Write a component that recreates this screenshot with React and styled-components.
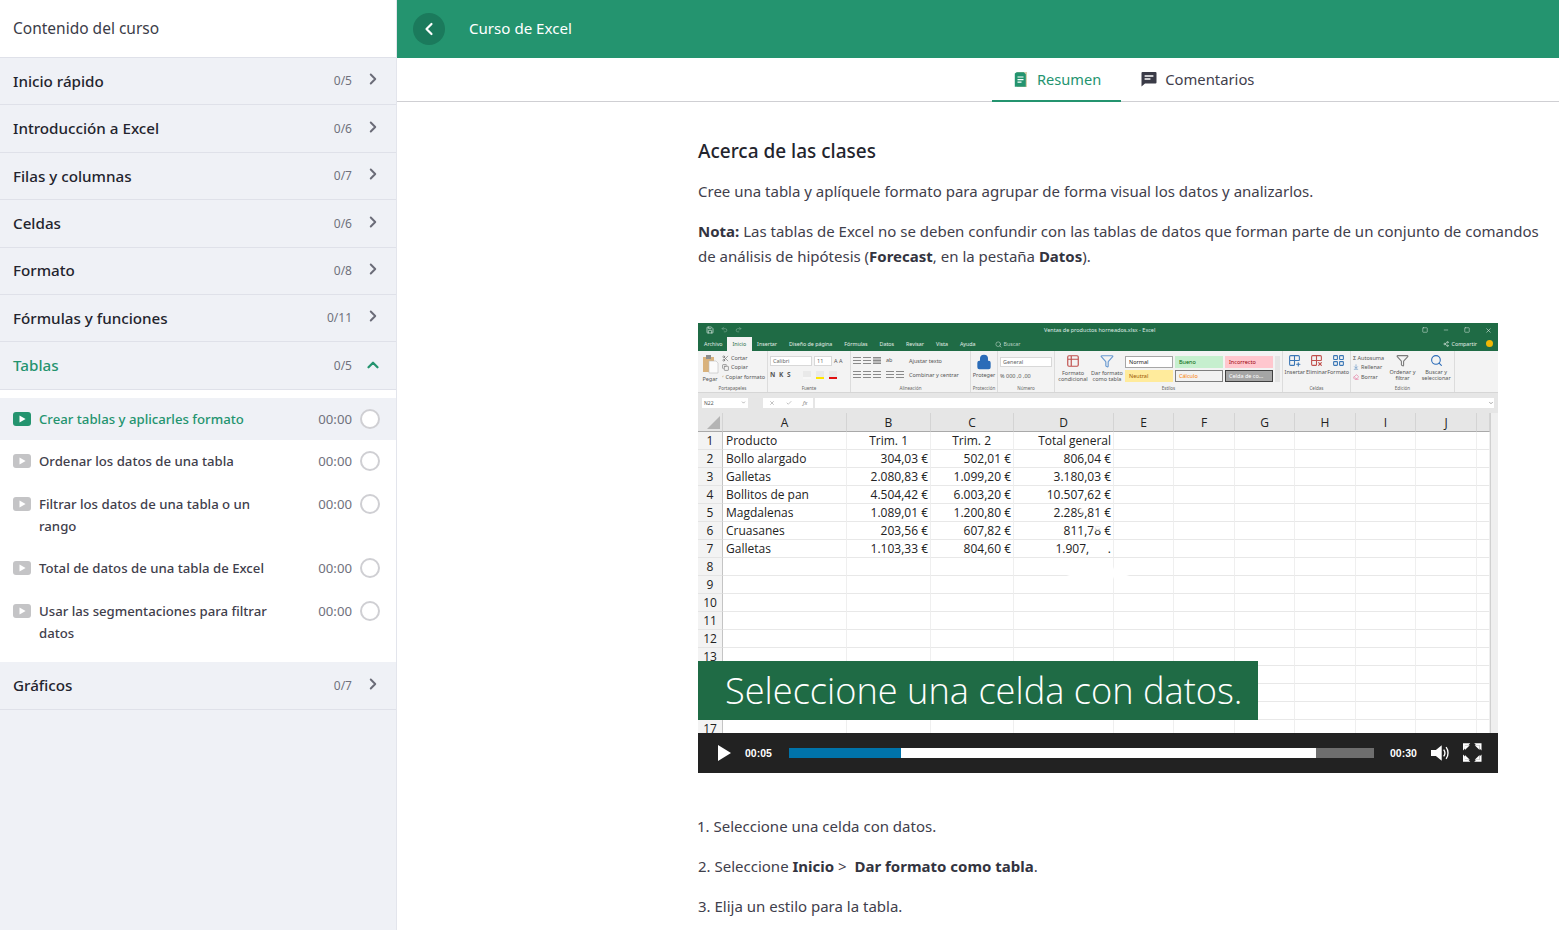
import React from "react";
import styled, { createGlobalStyle } from "styled-components";
import {
  ChevronRight,
  ChevronUp,
  ChevronLeft,
  ChevronDown,
  Scissors,
  Copy,
  Paintbrush,
  Save,
  Undo2,
  Redo2,
  Search,
  Share2,
  Lock,
  ArrowDownToLine,
  Eraser,
  Minus,
  Square,
  X,
  Check,
  Filter,
  Table2,
  Grid2x2Plus,
  Grid2x2X,
  LayoutGrid,
} from "lucide-react";

const GlobalStyle = createGlobalStyle`
  html, body {
    margin: 0;
    height: 100%;
    overflow: hidden;
    background: #fff;
    font-family: "Noto Sans", "Open Sans", sans-serif;
    color: #33343f;
  }
  * { box-sizing: border-box; }
`;

const sections = [
  { name: "Inicio rápido", count: "0/5" },
  { name: "Introducción a Excel", count: "0/6" },
  { name: "Filas y columnas", count: "0/7" },
  { name: "Celdas", count: "0/6" },
  { name: "Formato", count: "0/8" },
  { name: "Fórmulas y funciones", count: "0/11" },
];

const lessons = [
  { title: "Crear tablas y aplicarles formato", active: true },
  { title: "Ordenar los datos de una tabla" },
  { title: "Filtrar los datos de una tabla o un rango" },
  { title: "Total de datos de una tabla de Excel" },
  { title: "Usar las segmentaciones para filtrar datos" },
];

const columns = ["A", "B", "C", "D", "E", "F", "G", "H", "I", "J", ""];

const sheet = [
  ["Producto", "Trim. 1", "Trim. 2", "Total general"],
  ["Bollo alargado", "304,03 €", "502,01 €", "806,04 €"],
  ["Galletas", "2.080,83 €", "1.099,20 €", "3.180,03 €"],
  ["Bollitos de pan", "4.504,42 €", "6.003,20 €", "10.507,62 €"],
  ["Magdalenas", "1.089,01 €", "1.200,80 €", "2.289,81 €"],
  ["Cruasanes", "203,56 €", "607,82 €", "811,78 €"],
  ["Galletas", "1.103,33 €", "804,60 €", "1.907,      ."],
];

const excelTabs = ["Insertar", "Diseño de página", "Fórmulas", "Datos", "Revisar", "Vista", "Ayuda"];

const cellStyles = [
  { label: "Normal", bg: "#fff", fg: "#222", line: "#a6a6a6" },
  { label: "Bueno", bg: "#c6efce", fg: "#006100" },
  { label: "Incorrecto", bg: "#ffc7ce", fg: "#9c0006" },
  { label: "Neutral", bg: "#ffeb9c", fg: "#9c5700" },
  { label: "Cálculo", bg: "#f2f2f2", fg: "#fa7d00", line: "#7f7f7f" },
  { label: "Celda de co...", bg: "#a5a5a5", fg: "#fff", line: "#3f3f3f" },
];

const PlayBadge = ({ active }) => (
  <LessonIcon width="18" height="14" viewBox="0 0 18 14">
    <rect width="18" height="14" rx="3" fill={active ? "#24946f" : "#c4c4c6"} />
    <path d="M6.5 3.4v7.2L12.6 7z" fill="#fff" />
  </LessonIcon>
);

const SummaryIcon = () => (
  <svg width="13" height="15" viewBox="0 0 13 15">
    <path d="M3 0h10v15H3z" fill="#b9a76c" opacity="0.55" />
    <path d="M2.5 0.2h7.3l2 2v12.6h-11V1.5z" fill="#24946f" />
    <path d="M3.5 5h6M3.5 7.6h6M3.5 10.2h4" stroke="#fff" strokeWidth="1.2" />
  </svg>
);

const CommentIcon = () => (
  <svg width="16" height="16" viewBox="0 0 16 16">
    <path d="M1.500 1h13a1 1 0 0 1 1 1v9.600a1 1 0 0 1-1 1H4L.5 15.600V2a1 1 0 0 1 1-1z" fill="#3a3b47" />
    <path d="M3.600 5h8.800M3.600 8h5.800" stroke="#fff" strokeWidth="1.600" />
  </svg>
);

const PasteIcon = () => (
  <svg width="17" height="20" viewBox="0 0 17 20">
    <path d="M1 3h11v15H1z" fill="#d9b27c" />
    <path d="M4 1h5v4H4z" fill="#8d8d8d" />
    <path d="M7 7h7l2 2v10H7z" fill="#fbfbfb" stroke="#bdbdbd" strokeWidth="0.6" />
  </svg>
);

const SpeakerIcon = () => (
  <svg width="20" height="18" viewBox="0 0 20 18">
    <path d="M0 6h5l6-5v16l-6-5H0z" fill="#fff" />
    <path d="M13 5.500c1.500 2 1.500 5 0 7M15.500 3c2.600 3.400 2.600 8.600 0 12" stroke="#fff" strokeWidth="1.400" fill="none" />
  </svg>
);

const FullscreenIcon = () => (
  <svg width="19" height="19" viewBox="0 0 19 19">
    <path d="M0 0h7.500L5.500 2H2v3.500L0 7.500zM19 0v7.500l-2-2V2h-3.500l-2-2zM0 19v-7.500l2 2V17h3.500l2 2zM19 19h-7.500l2-2H17v-3.500l2-2z" fill="#fff" />
    <path d="M2 2h5L2 7zM17 2v5L12 2zM2 17v-5l5 5zM17 17h-5l5-5z" fill="#fff" />
  </svg>
);

const RibbonGroup = ({ width, label, children }) => (
  <GroupBox $w={width}>
    <GroupBody>{children}</GroupBody>
    <GroupLabel>{label}</GroupLabel>
  </GroupBox>
);

const App = () => {
  return (
    <Page>
      <GlobalStyle />
      <Sidebar>
        <SidebarTitle>Contenido del curso</SidebarTitle>
        {sections.map((s) => (
          <SectionRow key={s.name}>
            <SectionName>{s.name}</SectionName>
            <SectionCount>{s.count}</SectionCount>
            <Chevron><ChevronRight size={18} strokeWidth={2.6} /></Chevron>
          </SectionRow>
        ))}
        <SectionRow>
          <SectionName $open>Tablas</SectionName>
          <SectionCount>0/5</SectionCount>
          <Chevron $open><ChevronUp size={18} strokeWidth={3} /></Chevron>
        </SectionRow>
        <LessonList>
          {lessons.map((l) => (
            <Lesson key={l.title} $active={l.active}>
              <PlayBadge active={l.active} />
              <LessonTitle $active={l.active}>{l.title}</LessonTitle>
              <LessonTime>00:00</LessonTime>
              <LessonCheck />
            </Lesson>
          ))}
        </LessonList>
        <SectionRow>
          <SectionName>Gráficos</SectionName>
          <SectionCount>0/7</SectionCount>
          <Chevron><ChevronRight size={18} strokeWidth={2.6} /></Chevron>
        </SectionRow>
      </Sidebar>

      <Main>
        <TopBar>
          <BackButton><ChevronLeft size={20} strokeWidth={2.6} /></BackButton>
          <CourseTitle>Curso de Excel</CourseTitle>
        </TopBar>
        <Tabs>
          <Tab $active><SummaryIcon />Resumen</Tab>
          <Tab><CommentIcon />Comentarios</Tab>
        </Tabs>

        <Article>
          <Heading>Acerca de las clases</Heading>
          <Para>Cree una tabla y aplíquele formato para agrupar de forma visual los datos y analizarlos.</Para>
          <Para>
            <b>Nota:</b> Las tablas de Excel no se deben confundir con las tablas de datos que forman parte de un conjunto de comandos de análisis de hipótesis (<b>Forecast</b>, en la pestaña <b>Datos</b>).
          </Para>

          <Video>
            <ExcelTitle>
              <QuickTools>
                <Save size={8} />
                <Undo2 size={7} opacity={0.5} />
                <Redo2 size={7} opacity={0.5} />
              </QuickTools>
              <ExcelFile>Ventas de productos horneados.xlsx - Excel</ExcelFile>
              <WindowTools>
                <Square size={6} />
                <Minus size={6} />
                <Square size={6} />
                <X size={7} />
              </WindowTools>
            </ExcelTitle>
            <ExcelTabs>
              <ExcelTab>Archivo</ExcelTab>
              <ExcelTab $active>Inicio</ExcelTab>
              {excelTabs.map((t) => <ExcelTab key={t}>{t}</ExcelTab>)}
              <ExcelTab $search><Search size={7} /> Buscar</ExcelTab>
              <ShareBox><Share2 size={6} /> Compartir <Smiley /></ShareBox>
            </ExcelTabs>

            <Ribbon>
              <RibbonGroup width={70} label="Portapapeles">
                <BigTool $w={20}><PasteIcon /><Tiny>Pegar</Tiny></BigTool>
                <ToolColumn>
                  <ToolRow><Scissors size={7} /><Tiny>Cortar</Tiny></ToolRow>
                  <ToolRow><Copy size={7} /><Tiny>Copiar</Tiny></ToolRow>
                  <ToolRow><Paintbrush size={7} color="#c79a4b" /><Tiny>Copiar formato</Tiny></ToolRow>
                </ToolColumn>
              </RibbonGroup>
              <RibbonGroup width={83} label="Fuente">
                <ToolColumn>
                  <ToolRow>
                    <FieldBox $w={42}>Calibri</FieldBox>
                    <FieldBox $w={18}>11</FieldBox>
                    <Tiny>A A</Tiny>
                  </ToolRow>
                  <ToolRow>
                    <BoldTools>N K S</BoldTools>
                    <ColorChip $c="#f7f7f7" />
                    <ColorChip $c="#ffe600" />
                    <ColorChip $c="#e01010" />
                  </ToolRow>
                </ToolColumn>
              </RibbonGroup>
              <RibbonGroup width={120} label="Alineación">
                <GlyphColumn>
                  <ToolRow><LinesGlyph /><LinesGlyph /><LinesGlyph $on /></ToolRow>
                  <ToolRow><LinesGlyph /><LinesGlyph /><LinesGlyph /></ToolRow>
                </GlyphColumn>
                <GlyphColumn>
                  <ToolRow><Tiny>ab</Tiny></ToolRow>
                  <ToolRow><LinesGlyph /><LinesGlyph /></ToolRow>
                </GlyphColumn>
                <ToolColumn>
                  <ToolRow><Tiny>Ajustar texto</Tiny></ToolRow>
                  <ToolRow><Tiny>Combinar y centrar</Tiny></ToolRow>
                </ToolColumn>
              </RibbonGroup>
              <RibbonGroup width={27} label="Protección">
                <BigTool><Lock size={16} color="#2b6cb8" fill="#2b6cb8" /><Tiny>Proteger</Tiny></BigTool>
              </RibbonGroup>
              <RibbonGroup width={57} label="Número">
                <ToolColumn>
                  <FieldBox $w={52}>General</FieldBox>
                  <ToolRow><Tiny>% 000 ,0 ,00</Tiny></ToolRow>
                </ToolColumn>
              </RibbonGroup>
              <RibbonGroup width={228} label="Estilos">
                <BigTool $w={32}><Table2 size={14} color="#c0504d" /><Tiny>Formato condicional</Tiny></BigTool>
                <BigTool $w={32}><Filter size={14} color="#6b9bd1" /><Tiny>Dar formato como tabla</Tiny></BigTool>
                <StyleGrid>
                  {cellStyles.map((c) => (
                    <StyleSwatch key={c.label} $bg={c.bg} $fg={c.fg} $line={c.line}>{c.label}</StyleSwatch>
                  ))}
                </StyleGrid>
                <StyleScroll />
              </RibbonGroup>
              <RibbonGroup width={68} label="Celdas">
                <BigTool><Grid2x2Plus size={13} color="#3a76b5" /><Tiny>Insertar</Tiny></BigTool>
                <BigTool><Grid2x2X size={13} color="#c0504d" /><Tiny>Eliminar</Tiny></BigTool>
                <BigTool><LayoutGrid size={13} color="#3a76b5" /><Tiny>Formato</Tiny></BigTool>
              </RibbonGroup>
              <RibbonGroup width={104} label="Edición">
                <ToolColumn>
                  <ToolRow><Tiny>Σ Autosuma</Tiny></ToolRow>
                  <ToolRow><ArrowDownToLine size={6} color="#3a76b5" /><Tiny>Rellenar</Tiny></ToolRow>
                  <ToolRow><Eraser size={6} color="#e05a8a" /><Tiny>Borrar</Tiny></ToolRow>
                </ToolColumn>
                <BigTool><Filter size={13} color="#7a7a7a" /><Tiny>Ordenar y filtrar</Tiny></BigTool>
                <BigTool><Search size={13} color="#2b6cb8" /><Tiny>Buscar y seleccionar</Tiny></BigTool>
              </RibbonGroup>
            </Ribbon>

            <FormulaBar>
              <NameBox>N22<ChevronDown size={5} /></NameBox>
              <FormulaTools><X size={6} /><Check size={6} /><i>fx</i></FormulaTools>
              <FormulaInput><ChevronDown size={6} /></FormulaInput>
            </FormulaBar>

            <SheetArea>
              <SheetGrid>
                <ColumnHead><CornerMark /></ColumnHead>
                {columns.map((c, i) => <ColumnHead key={i}>{c}</ColumnHead>)}
                {Array.from({ length: 17 }).map((_, r) => (
                  <React.Fragment key={r}>
                    <RowHead>{r + 1}</RowHead>
                    {columns.map((c, i) => {
                      const value = sheet[r] && sheet[r][i];
                      return (
                        <Cell key={i} $num={i > 0 && i < 4} $head={r === 0 && (i === 1 || i === 2)}>
                          {value}
                        </Cell>
                      );
                    })}
                  </React.Fragment>
                ))}
              </SheetGrid>
              <SheetScroll><ScrollThumb /></SheetScroll>
            </SheetArea>

            <Caption>Seleccione una celda con datos.</Caption>
            <Wipe $x={382} $y={184} $w={7} $h={6} />
            <Wipe $x={396} $y={202} $w={8} $h={5} />
            <Wipe $x={370} $y={245} $w={60} $h={10} />

            <Controls>
              <PlayButton />
              <TimeLabel>00:05</TimeLabel>
              <Track>
                <TrackFill $w={527} $c="#fff" />
                <TrackFill $w={112} $c="#0073aa" />
              </Track>
              <TimeLabel $end>00:30</TimeLabel>
              <SpeakerIcon />
              <FullscreenIcon />
            </Controls>
          </Video>

          <StepPara>1. Seleccione una celda con datos.</StepPara>
          <Para>2. Seleccione <b>Inicio</b> &gt;&nbsp; <b>Dar formato como tabla</b>.</Para>
          <Para>3. Elija un estilo para la tabla.</Para>
        </Article>
      </Main>
    </Page>
  );
};

const Page = styled.div`
  display: flex;
  height: 100vh;
  overflow: hidden;
`;

const Sidebar = styled.aside`
  width: 397px;
  flex: none;
  height: 100%;
  background: #eff1f6;
  border-right: 1px solid #e3e5ec;
`;
const SidebarTitle = styled.div`
  height: 58px;
  padding: 0 0 2px 13px;
  display: flex;
  align-items: center;
  background: #fff;
  font-size: 15.5px;
  color: #3b3c48;
  border-bottom: 1px solid #dfe1e9;
`;
const SectionRow = styled.div`
  height: 47.4px;
  display: flex;
  align-items: center;
  padding: 0 14px 0.6px 13px;
  border-bottom: 1px solid #dfe1e9;
`;
const SectionName = styled.div`
  flex: 1;
  font-size: 15.2px;
  font-weight: 500;
  color: ${({ $open }) => ($open ? "#24946f" : "#23242d")};
`;
const SectionCount = styled.div`
  font-size: 12px;
  color: #70717d;
  width: 30px;
  text-align: right;
  white-space: nowrap;
`;
const Chevron = styled.div`
  width: 30px;
  display: flex;
  justify-content: flex-end;
  margin-top: ${({ $open }) => ($open ? "0" : "-3px")};
  color: ${({ $open }) => ($open ? "#24946f" : "#6b6c78")};
`;

const LessonList = styled.div`
  background: #fff;
  padding: 8px 0;
`;
const Lesson = styled.div`
  display: flex;
  align-items: flex-start;
  padding: 10.2px 16px 9.9px 13px;
  background: ${({ $active }) => ($active ? "#eff1f6" : "transparent")};
`;
const LessonIcon = styled.svg`
  flex: none;
  margin: 4px 8px 0 0;
`;
const LessonTitle = styled.div`
  width: 240px;
  font-size: 13.2px;
  font-weight: 500;
  line-height: 22.3px;
  color: ${({ $active }) => ($active ? "#24946f" : "#3f404c")};
`;
const LessonTime = styled.div`
  margin-left: auto;
  font-size: 13.2px;
  line-height: 22px;
  color: #70717d;
`;
const LessonCheck = styled.div`
  flex: none;
  width: 20px;
  height: 20px;
  margin: 1px 0 0 8px;
  border: 2px solid #cfcfd3;
  border-radius: 50%;
  background: #fff;
`;

const Main = styled.main`
  flex: 1;
  min-width: 0;
  height: 100%;
  overflow: hidden;
`;
const TopBar = styled.header`
  height: 58px;
  background: #24946f;
  display: flex;
  align-items: center;
  padding-left: 16px;
`;
const BackButton = styled.div`
  width: 32px;
  height: 32px;
  border-radius: 50%;
  background: #1b7a5c;
  color: #fff;
  display: flex;
  align-items: center;
  justify-content: center;
`;
const CourseTitle = styled.div`
  margin: 0 0 2px 24px;
  color: #fff;
  font-size: 15.1px;
`;
const Tabs = styled.nav`
  height: 44px;
  display: flex;
  padding-left: 595px;
  border-bottom: 1px solid #cfcfd3;
`;
const Tab = styled.div`
  height: 44px;
  display: flex;
  align-items: center;
  gap: ${({ $active }) => ($active ? "10px" : "8px")};
  padding: ${({ $active }) => ($active ? "0 20px 0 22px" : "0 20px")};
  font-size: ${({ $active }) => ($active ? "14.6px" : "14.8px")};
  color: ${({ $active }) => ($active ? "#24946f" : "#3f404c")};
  border-bottom: 2px solid ${({ $active }) => ($active ? "#24946f" : "transparent")};
`;

const Article = styled.article`
  padding: 35px 14px 0 301px;
`;
const Heading = styled.h2`
  margin: 0 0 13.5px;
  font-size: 19px;
  font-weight: 500;
  line-height: 28px;
  color: #23242d;
`;
const Para = styled.p`
  margin: 0 0 15px;
  font-size: 15px;
  line-height: 25px;
  color: #3f404c;
  b { font-weight: 700; color: #33343f; }
`;
const StepPara = styled(Para)`
  margin-top: 41px;
  margin-left: -1px;
`;

const Video = styled.div`
  position: relative;
  width: 800px;
  height: 450px;
  margin-top: 54px;
  display: flex;
  flex-direction: column;
  overflow: hidden;
  background: #fff;
`;
const ExcelTitle = styled.div`
  height: 13px;
  flex: none;
  padding: 2px 6px 0 8px;
  background: #1f6b45;
  color: #dfece5;
  display: flex;
  align-items: center;
  justify-content: space-between;
`;
const QuickTools = styled.div`
  display: flex;
  gap: 7px;
  width: 338px;
`;
const ExcelFile = styled.div`
  font-size: 5.5px;
  flex: 1;
`;
const WindowTools = styled.div`
  display: flex;
  gap: 15px;
  align-items: center;
`;
const ExcelTabs = styled.div`
  height: 15px;
  flex: none;
  background: #1f6b45;
  display: flex;
  align-items: flex-end;
`;
const ExcelTab = styled.div`
  height: 14px;
  display: flex;
  align-items: center;
  gap: 2px;
  padding: 1px 6px 0;
  font-size: 5.3px;
  white-space: nowrap;
  color: ${({ $active }) => ($active ? "#1f6b45" : "#e4efe9")};
  background: ${({ $active }) => ($active ? "#f3f3f3" : "transparent")};
  margin-left: ${({ $active, $search }) => ($active ? "-2px" : $search ? "7px" : "0")};
  margin-right: ${({ $active }) => ($active ? "-1px" : "0")};
  ${({ $search }) => $search && "color: #bcd5c8;"}
`;
const ShareBox = styled.div`
  margin-left: auto;
  height: 14px;
  padding-right: 5px;
  display: flex;
  align-items: center;
  gap: 3px;
  font-size: 5.3px;
  color: #e4efe9;
`;
const Smiley = styled.span`
  display: inline-block;
  width: 7px;
  height: 7px;
  margin-left: 6px;
  border-radius: 50%;
  background: #f2b705;
`;
const Ribbon = styled.div`
  height: 42px;
  flex: none;
  display: flex;
  background: #f3f3f3;
  border-bottom: 1px solid #d6d6d6;
`;
const GroupBox = styled.div`
  width: ${({ $w }) => $w}px;
  flex: none;
  display: flex;
  flex-direction: column;
  border-right: 1px solid #dcdcdc;
`;
const GroupBody = styled.div`
  flex: 1;
  min-height: 0;
  display: flex;
  gap: 2px;
  padding: 3px 2px 0;
  overflow: hidden;
`;
const GroupLabel = styled.div`
  height: 8px;
  font-size: 4.5px;
  line-height: 8px;
  text-align: center;
  color: #666;
`;
const BigTool = styled.div`
  ${({ $w }) => ($w ? `width: ${$w}px; flex: none;` : "flex: 1; min-width: 0;")}
  display: flex;
  flex-direction: column;
  align-items: center;
  gap: 2px;
  text-align: center;
`;
const ToolColumn = styled.div`
  flex: 1;
  min-width: 0;
  display: flex;
  flex-direction: column;
  justify-content: space-around;
  padding-bottom: 2px;
  color: #666;
`;
const GlyphColumn = styled(ToolColumn)`
  flex: none;
  margin-right: 3px;
`;
const ToolRow = styled.div`
  display: flex;
  align-items: center;
  gap: 2px;
  white-space: nowrap;
`;
const Tiny = styled.span`
  font-size: 5.5px;
  line-height: 6px;
  color: #555;
`;
const BoldTools = styled.span`
  margin-right: 10px;
  font-size: 6.5px;
  font-weight: 700;
  color: #555;
  word-spacing: 2px;
`;
const FieldBox = styled.div`
  width: ${({ $w }) => $w}px;
  height: 10px;
  padding-left: 2px;
  background: #fff;
  border: 1px solid #d8d8d8;
  font-size: 5.5px;
  line-height: 8px;
  color: #666;
`;
const ColorChip = styled.span`
  width: 8px;
  height: 8px;
  margin-right: 3px;
  border-bottom: 2px solid ${({ $c }) => $c};
  background: #e9e9e9;
`;
const LinesGlyph = styled.span`
  width: 8px;
  height: 7px;
  background: repeating-linear-gradient(#8a8a8a 0 1px, transparent 1px 3px);
  ${({ $on }) => $on && "background-color: #bdbdbd;"}
`;
const StyleGrid = styled.div`
  width: 148px;
  flex: none;
  margin-top: 2px;
  display: grid;
  grid-template-columns: repeat(3, 1fr);
  grid-auto-rows: 12px;
  gap: 2px;
`;
const StyleSwatch = styled.div`
  padding-left: 3px;
  font-size: 5.5px;
  line-height: 10px;
  white-space: nowrap;
  overflow: hidden;
  background: ${({ $bg }) => $bg};
  color: ${({ $fg }) => $fg};
  border: 1px solid ${({ $line, $bg }) => $line || $bg};
`;
const StyleScroll = styled.div`
  width: 6px;
  height: 26px;
  margin-top: 2px;
  background: #e4e4e4;
`;
const FormulaBar = styled.div`
  height: 20px;
  flex: none;
  display: flex;
  align-items: center;
  gap: 2px;
  padding: 0 4px;
  background: #e6e6e6;
`;
const NameBox = styled.div`
  width: 46px;
  height: 10px;
  padding: 0 2px;
  display: flex;
  align-items: center;
  justify-content: space-between;
  background: #fff;
  font-size: 5px;
  color: #555;
`;
const FormulaTools = styled.div`
  width: 50px;
  height: 10px;
  margin-left: 13px;
  display: flex;
  align-items: center;
  justify-content: space-around;
  background: #fff;
  font-size: 6px;
  color: #888;
`;
const FormulaInput = styled.div`
  flex: 1;
  height: 10px;
  display: flex;
  align-items: center;
  justify-content: flex-end;
  background: #fff;
  color: #555;
`;
const SheetArea = styled.div`
  flex: 1;
  min-height: 0;
  display: flex;
  overflow: hidden;
`;
const SheetGrid = styled.div`
  width: 792px;
  flex: none;
  display: grid;
  grid-template-columns: 25px 124px 84px 83px 100px 60px 61px 60px 61px 60px 61px 13px;
  grid-template-rows: 19px;
  grid-auto-rows: 18px;
  font-family: "Open Sans", "Noto Sans", sans-serif;
  font-size: 12px;
  color: #222;
`;
const ColumnHead = styled.div`
  position: relative;
  padding-top: 2px;
  display: flex;
  align-items: center;
  justify-content: center;
  background: #e6e6e6;
  border-right: 1px solid #d4d4d4;
  border-bottom: 1px solid #a9a9a9;
`;
const CornerMark = styled.span`
  position: absolute;
  right: 2px;
  bottom: 2px;
  border-style: solid;
  border-width: 0 0 13px 13px;
  border-color: transparent transparent #b4b4b4 transparent;
`;
const RowHead = styled.div`
  display: flex;
  align-items: center;
  justify-content: center;
  background: #f3f3f3;
  border-right: 1px solid #c4c4c4;
  border-bottom: 1px solid #e4e4e4;
`;
const Cell = styled.div`
  display: flex;
  align-items: center;
  justify-content: ${({ $num }) => ($num ? "flex-end" : "flex-start")};
  padding: ${({ $head }) => ($head ? "0 22px 0 3px" : "0 2px 0 3px")};
  white-space: pre;
  border-right: 1px solid #efefef;
  border-bottom: 1px solid #e8e8e8;
`;
const SheetScroll = styled.div`
  flex: 1;
  display: flex;
  align-items: flex-end;
  background: #efefef;
  border-left: 1px solid #d0d0d0;
`;
const ScrollThumb = styled.div`
  width: 100%;
  height: 37px;
  background: #c4c4c4;
`;
const Caption = styled.div`
  position: absolute;
  left: 0;
  top: 338px;
  width: 560px;
  height: 59px;
  padding-left: 27px;
  display: flex;
  align-items: center;
  background: #1f6b45;
  color: #fff;
  font-family: "Open Sans", "Noto Sans", sans-serif;
  font-weight: 300;
  font-size: 36.2px;
  white-space: nowrap;
`;
const Wipe = styled.div`
  position: absolute;
  left: ${({ $x }) => $x}px;
  top: ${({ $y }) => $y}px;
  width: ${({ $w }) => $w}px;
  height: ${({ $h }) => $h}px;
  background: #fff;
  filter: blur(1px);
`;
const Controls = styled.div`
  position: absolute;
  left: 0;
  right: 0;
  bottom: 0;
  height: 40px;
  padding: 0 16px 0 20px;
  display: flex;
  align-items: center;
  gap: 13px;
  background: #222;
`;
const PlayButton = styled.span`
  flex: none;
  margin-right: 1px;
  border-style: solid;
  border-width: 8px 0 8px 13px;
  border-color: transparent transparent transparent #fff;
`;
const TimeLabel = styled.span`
  flex: none;
  width: 28px;
  margin: ${({ $end }) => ($end ? "0 0 0 3px" : "0 3px 0 0")};
  font-family: "Liberation Sans", sans-serif;
  font-size: 10.5px;
  font-weight: 700;
  color: #fff;
`;
const Track = styled.div`
  position: relative;
  flex: none;
  width: 585px;
  height: 10px;
  background: #6e6e6e;
`;
const TrackFill = styled.div`
  position: absolute;
  left: 0;
  top: 0;
  bottom: 0;
  width: ${({ $w }) => $w}px;
  background: ${({ $c }) => $c};
`;

export default App;
